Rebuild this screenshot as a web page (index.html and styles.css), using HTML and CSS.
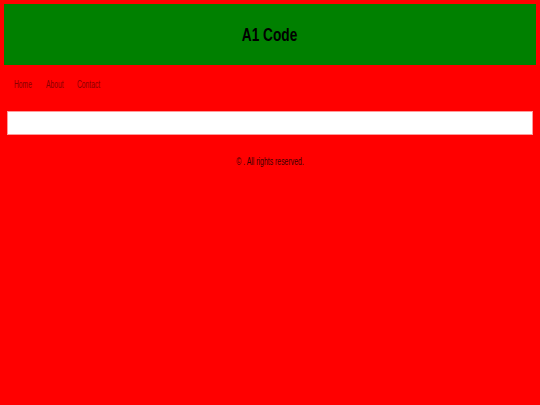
FILE: index.html
```html
<!DOCTYPE html>
<html>
<head>
<meta charset="utf-8">
<link rel="stylesheet" href="styles.css">
</head>
<body>
<header class="site-header">
  <h1 class="title">A1 Code</h1>
</header>
<nav class="nav">
  <a href="#" class="nav-link">Home</a>
  <a href="#" class="nav-link">About</a>
  <a href="#" class="nav-link">Contact</a>
</nav>
<main class="content"></main>
<footer class="footer">
  <p class="copy">© . All rights reserved.</p>
</footer>
</body>
</html>
```

FILE: styles.css
```css
html, body {
  background: #ff0000;
}
body {
  margin: 4px;
  font-family: "Liberation Sans", Arial, sans-serif;
}
.site-header {
  background: #008000;
  height: 61px;
  display: flex;
  align-items: center;
  justify-content: center;
}
.title {
  margin: 0;
  font-size: 18px;
  font-weight: bold;
  color: #000;
  transform: scaleX(0.76);
  position: relative;
  top: 1px;
}
.nav {
  box-sizing: border-box;
  display: flex;
  gap: 5px;
  padding: 14px 10px 0;
  height: 32px;
}
.nav-link {
  display: inline-block;
  font-size: 10px;
  line-height: 12px;
  height: 12px;
  color: #880000;
  text-decoration: none;
  transform: scaleX(0.67);
  transform-origin: left center;
}
.content {
  background: #fff;
  border: 1px solid #ff9a9a;
  height: 22px;
  margin: 14px 3px 0 3px;
}
.footer {
  text-align: center;
  padding-top: 21px;
}
.copy {
  margin: 0;
  font-size: 10px;
  color: #3a0000;
  transform: scaleX(0.69);
}
```
